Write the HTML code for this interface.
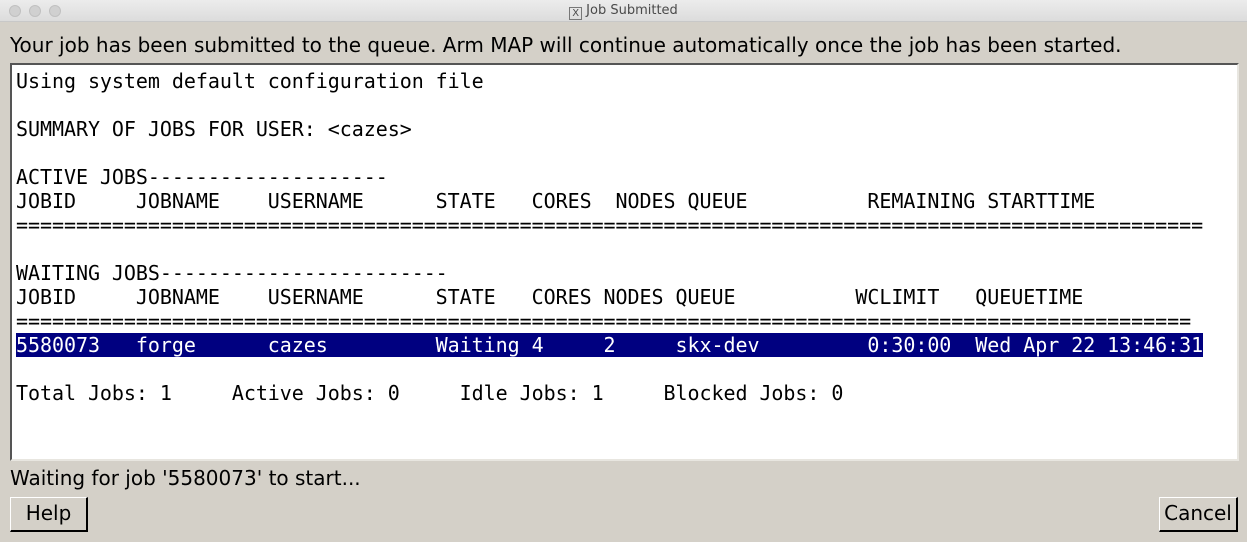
<!DOCTYPE html>
<html><head><style>
*{margin:0;padding:0;box-sizing:border-box}
body{width:1247px;height:542px;background:#d4d0c8;position:relative;overflow:hidden;font-family:"DejaVu Sans","Liberation Sans",sans-serif;}
.tb{position:absolute;left:0;top:0;width:1247px;height:22px;background:linear-gradient(#ececec,#dcdcdc);border-bottom:1px solid #c8c8c8;text-align:center;font-size:13px;line-height:22px;color:#4a4a4a}
.dot{position:absolute;top:5px;width:12px;height:12px;border-radius:50%;background:#d0d0d0;border:1px solid #c0c0c0}
.lab{position:absolute;left:10px;font-size:20px;color:#000;white-space:nowrap}
.ta{position:absolute;left:10px;top:63px;width:1229px;height:398px;background:#fff;border-top:2px solid #555;border-left:2px solid #555;border-right:2px solid #e8e6e0;border-bottom:2px solid #e8e6e0}
pre{position:absolute;left:4px;top:4px;font-family:"DejaVu Sans Mono","Liberation Mono",monospace;font-size:20px;letter-spacing:-0.05px;line-height:24px;color:#000}
.hl{background:#000080;color:#fff}
.btn{position:absolute;top:497px;height:35px;font-size:20px;line-height:31px;text-align:center;background:#d4d0c8;border-top:1px solid #fff;border-left:1px solid #fff;border-right:2px solid #000;border-bottom:2px solid #000}
</style></head><body>
<div class="tb"><span style="display:inline-block;width:13px;height:13px;border:1px solid #777;font-size:10px;line-height:11px;vertical-align:-2px;margin-right:4px">X</span>Job Submitted</div>
<div class="dot" style="left:9px"></div><div class="dot" style="left:29px"></div><div class="dot" style="left:49px"></div>
<div class="lab" style="top:33px">Your job has been submitted to the queue. Arm MAP will continue automatically once the job has been started.</div>
<div class="ta"><pre>Using system default configuration file

SUMMARY OF JOBS FOR USER: &lt;cazes&gt;

ACTIVE JOBS--------------------
JOBID     JOBNAME    USERNAME      STATE   CORES  NODES QUEUE          REMAINING STARTTIME
===================================================================================================

WAITING JOBS------------------------
JOBID     JOBNAME    USERNAME      STATE   CORES NODES QUEUE          WCLIMIT   QUEUETIME
==================================================================================================
<span class="hl">5580073   forge      cazes         Waiting 4     2     skx-dev         0:30:00  Wed Apr 22 13:46:31</span>

Total Jobs: 1     Active Jobs: 0     Idle Jobs: 1     Blocked Jobs: 0</pre></div>
<div class="lab" style="top:466px">Waiting for job '5580073' to start...</div>
<div class="btn" style="left:10px;width:78px">Help</div>
<div class="btn" style="left:1159px;width:79px">Cancel</div>
</body></html>
